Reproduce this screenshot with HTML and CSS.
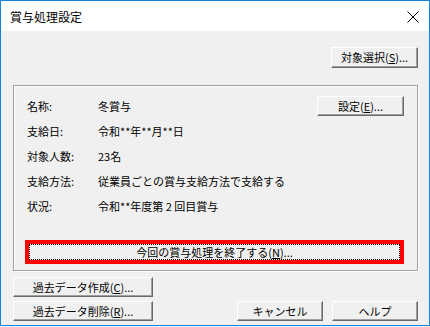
FILE: index.html
```html
<!DOCTYPE html>
<html>
<head>
  <title>賞与処理設定</title>
  <link rel="stylesheet" href="styles.css">
</head>
<body>
  <div class="window">
    <div class="titlebar">
      <span class="title">賞与処理設定</span>
      <span class="close">
        <svg width="12" height="12" viewBox="0 0 12 12">
          <line x1="0.5" y1="0.5" x2="11.5" y2="11.5" stroke="#000" stroke-width="1"/>
          <line x1="11.5" y1="0.5" x2="0.5" y2="11.5" stroke="#000" stroke-width="1"/>
        </svg>
      </span>
    </div>

    <div class="content">
      <div class="top-row">
        <button class="btn btn-select">対象選択(<u>S</u>)...</button>
      </div>

      <div class="group">
        <div class="row">
          <span class="label">名称:</span>
          <span class="value">冬賞与</span>
          <button class="btn btn-setting">設定(<u>E</u>)...</button>
        </div>
        <div class="row">
          <span class="label">支給日:</span>
          <span class="value">令和**年**月**日</span>
        </div>
        <div class="row">
          <span class="label">対象人数:</span>
          <span class="value">23名</span>
        </div>
        <div class="row">
          <span class="label">支給方法:</span>
          <span class="value">従業員ごとの賞与支給方法で支給する</span>
        </div>
        <div class="row">
          <span class="label">状況:</span>
          <span class="value">令和**年度第 2 回目賞与</span>
        </div>

        <div class="highlight">
          <button class="btn btn-finish"><span class="focus">今回の賞与処理を終了する(<u>N</u>)...</span></button>
        </div>
      </div>

      <div class="bottom">
        <div class="bottom-row">
          <button class="btn btn-wide">過去データ作成(<u>C</u>)...</button>
        </div>
        <div class="bottom-row">
          <button class="btn btn-wide">過去データ削除(<u>R</u>)...</button>
          <span class="spacer"></span>
          <button class="btn btn-std">キャンセル</button>
          <button class="btn btn-std">ヘルプ</button>
        </div>
      </div>
    </div>
  </div>
</body>
</html>
```

FILE: styles.css
```css
html, body {
  margin: 0;
  padding: 0;
}
body {
  font-family: "Noto Sans CJK JP", "Noto Sans", sans-serif;
  font-size: 11px;
  color: #000;
  background: #f0f0f0;
}
.window {
  width: 430px;
  height: 326px;
  box-sizing: border-box;
  border: 1px solid #1883d7;
  background: #f0f0f0;
  overflow: hidden;
}
.titlebar {
  height: 30px;
  background: #fff;
  display: flex;
  align-items: center;
  padding-left: 9px;
  padding-right: 10px;
}
.title {
  flex: 1;
  font-size: 12px;
}
.close {
  display: flex;
  margin-top: 1px;
}
.content {
  padding: 16px 11px 0 12px;
}
.top-row {
  display: flex;
  justify-content: flex-end;
}
.btn {
  font-family: inherit;
  font-size: 11px;
  line-height: 1;
  color: #000;
  background: #f0f0f0;
  border: 1px solid;
  border-color: #fff #696969 #696969 #fff;
  box-shadow: inset -1px -1px 0 #a0a0a0;
  padding: 0;
  margin: 0;
  height: 21px;
  display: flex;
  align-items: center;
  justify-content: center;
}
.btn u {
  text-decoration-thickness: 1px;
  text-underline-offset: 1px;
}
.btn-select {
  width: 87px;
}
.group {
  margin-top: 17px;
  height: 186px;
  box-sizing: border-box;
  border: 1px solid #a0a0a0;
  box-shadow: inset 1px 1px 0 #fff, 1px 1px 0 #fff;
  padding: 10px 13px 6px 11px;
  display: flex;
  flex-direction: column;
}
.row {
  display: flex;
  align-items: center;
  height: 20px;
  margin-bottom: 5px;
  padding-left: 2px;
}
.label {
  width: 71px;
}
.value {
  flex: 1;
}
.btn-setting {
  width: 87px;
  height: 20px;
}
.highlight {
  margin-top: auto;
  border: 4px solid #f00;
  height: 24px;
  box-sizing: border-box;
  display: flex;
}
.btn-finish {
  flex: 1;
  height: 16px;
  border: none;
  box-shadow: none;
  padding: 0;
}
.focus {
  flex: 1;
  align-self: stretch;
  display: flex;
  align-items: center;
  justify-content: center;
  border: 1px dotted #000;
}
.bottom {
  margin-top: 6px;
  display: flex;
  flex-direction: column;
  gap: 4px;
}
.bottom-row {
  display: flex;
  gap: 9px;
}
.spacer {
  flex: 1;
}
.btn-wide {
  width: 140px;
  height: 20px;
}
.btn-std {
  width: 86px;
  height: 20px;
}
```
